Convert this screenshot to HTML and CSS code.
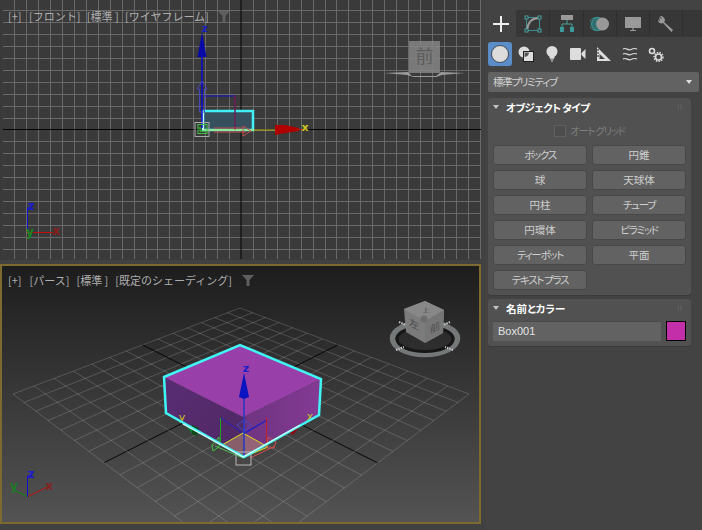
FILE: index.html
```html
<!DOCTYPE html>
<html lang="ja">
<head>
<meta charset="utf-8">
<title>3ds Max</title>
<link rel="stylesheet" href="styles.css">
</head>
<body>
<div class="app">
  <main class="views">
    <section class="viewport front">
      <svg class="scene" viewBox="0 0 481 260" width="481" height="260" aria-hidden="true">
        <g id="front-grid"></g>
        <!-- view cube -->
        <rect x="409" y="41" width="31" height="32" fill="#8a8a8a" fill-opacity=".8"/>
        <rect x="413" y="44" width="23" height="26" fill="#7c7c7c" fill-opacity=".6"/>
        <text x="424.500" y="63" class="cube-label big" text-anchor="middle">前</text>
        <path d="M384 73 L408 72 L412 76 L436 76 L441 72 L465 73 L442 75 L436 77 L414 77 L407 75Z" fill="#9a9a9a"/>
        <!-- box -->
        <rect x="203" y="111" width="50" height="19" fill="#37505e" stroke="#41f0f5" stroke-width="2.500"/>
        <path d="M203 111V130" stroke="#e8ffff" stroke-width="1.500"/>
        <path d="M204 96H235V130" fill="none" stroke="#1414c8"/>
        <path d="M235 96V130" stroke="#9a2020"/>
        <!-- gizmo -->
        <path d="M202 128V56" stroke="#0a0ad0" stroke-width="1.500"/>
        <path d="M202 32L197.500 57H206.500Z" fill="#0a0aa8"/>
        <path d="M197 89L202 81L207 89H204.500V112H199.500V89Z" fill="none" stroke="#4848b8"/>
        <path d="M203 130H275" stroke="#e0e040"/>
        <path d="M214 128H243M214 132H246" stroke="#c25050"/>
        <path d="M243 126V136L251 131Z" fill="none" stroke="#c25050"/>
        <path d="M275 125L285 125L299 128L299 131L285 133L275 135Z" fill="#b00000"/>
        <path d="M299 129.500H304" stroke="#c02020"/>
        <text x="305" y="131" class="axis yellow" text-anchor="middle">x</text>
        <text x="205" y="32" class="axis blue tiny" text-anchor="middle">z</text>
        <rect x="195" y="122.500" width="14" height="14" fill="none" stroke="#a8a8a8"/>
        <rect x="198" y="124.500" width="9" height="9" fill="none" stroke="#40c040"/>
        <path d="M200 127V131H205" fill="none" stroke="#40e040"/>
        <!-- tripod -->
        <path d="M27.500 233V208H33" fill="none" stroke="#1212c8"/>
        <path d="M27 232.500H53" stroke="#c01010"/>
        <text x="31" y="210" class="axis blue small" text-anchor="middle">z</text>
        <text x="56" y="235" class="axis red small" text-anchor="middle">x</text>
        <text x="30" y="236" class="axis green small" text-anchor="middle">y</text>
      </svg>
      <div class="labels">
        <span class="tag first">[+]</span><span class="tag">[フロント]</span><span class="tag">[標準 ]</span><span class="tag">[ワイヤフレーム]</span>
        <svg class="funnel" viewBox="0 0 12 11" width="12" height="11"><path d="M0 0H12L7.500 5V11H4.500V5Z"/></svg>
      </div>
    </section>

    <section class="viewport persp">
      <svg class="scene" viewBox="0 0 477 256" width="477" height="256" aria-hidden="true">
        <g transform="translate(-2 -266)">
          <g id="persp-grid"></g>
          <!-- box -->
          <path d="M164 377L243 417L244 457L166 413Z" fill="url(#leftFace)"/>
          <path d="M321 379L243 417L244 457L319 415Z" fill="url(#rightFace)"/>
          <path d="M240 345L321 379L243 417L164 377Z" fill="#993fa9"/>
          <!-- gizmo on box -->
          <path d="M221 418L244 434L267 420L244 433" fill="none" stroke="#2020c8"/>
          <path d="M244 434V420L237 425L244 431L251 425L244 420" fill="none" stroke="#4848c8"/>
          <path d="M220.500 418V442" stroke="#20a020"/>
          <path d="M266.500 418V444" stroke="#c02020"/>
          <path d="M222 445L243 433L268 447L244 457Z" fill="#b48a70" fill-opacity=".55" stroke="#e0e020"/>
          <path d="M212 445L219 437V447L213 451Z" fill="none" stroke="#40c040"/>
          <path d="M268 437L276 442L274 448L267 448Z" fill="none" stroke="#c85050"/>
          <path d="M215 446L243 458" fill="none" stroke="#50c050"/>
          <path d="M250 458L275 446" fill="none" stroke="#d05050"/>
          <path d="M184 423L198 428L193 435Z" fill="#0a7a30"/>
          <path d="M192 425L199 428L197 436L192 434Z" fill="#0a4a18"/>
          <path d="M288 432L300 424L298 429L293 435Z" fill="#8c0c14"/>
          <text x="182" y="421" class="axis yellow thin" text-anchor="middle">y</text>
          <text x="310" y="420" class="axis yellow thin" text-anchor="middle">x</text>
          <path d="M244 456V398" stroke="#2438c0" stroke-width="1.500"/>
          <path d="M244 373L239 397L244 399L249 397Z" fill="#0a14c0"/>
          <text x="246" y="372" class="axis blue" text-anchor="middle">z</text>
          <rect x="236" y="452" width="15" height="13" fill="none" stroke="#b8b8b8"/>
          <!-- outline -->
          <path d="M164 377L240 345L321 379L319 415L244 457L166 413Z" fill="none" stroke="#41f5f5" stroke-width="2.500"/>
          <path d="M183 424L243 457L300 425" fill="none" stroke="#d8ffff" stroke-width="1.200"/>
          <!-- view cube -->
          <ellipse cx="425" cy="338.500" rx="32.500" ry="16" fill="none" stroke="#747879" stroke-width="5.500"/>
          <ellipse cx="425" cy="339" rx="28" ry="12.500" fill="none" stroke="#161616" stroke-width="3"/>
          <path d="M425 301L444 310L443 333L425 343L406 332L404 309Z" fill="#7b7b7b"/>
          <path d="M425 301L444 310L425 321L404 309Z" fill="#888"/>
          <path d="M425 321L444 310L443 333L425 343Z" fill="#767676"/>
          <text class="cube-label" transform="translate(435 331) skewY(-28)" text-anchor="middle">前</text>
          <text class="cube-label" transform="translate(414 328) skewY(28)" text-anchor="middle">左</text>
          <text class="cube-label" transform="translate(426 312) scale(.8 .5)" text-anchor="middle">上</text>
          <circle cx="424" cy="319" r="3.500" fill="#6d6d6d"/>
          <g fill="none" stroke="#c4c4c4" stroke-width="2" stroke-dasharray="1.500 1">
            <path d="M399 322l7 3M450 322l-7 3M396 350l8-3M453 350l-8-3"/>
          </g>
          <!-- tripod -->
          <path d="M27.500 497V476H33" fill="none" stroke="#1212c8"/>
          <path d="M28 496.500L47 487" stroke="#c01010"/>
          <path d="M27 496.500L14 490" stroke="#108a10"/>
          <text x="31" y="478" class="axis blue small" text-anchor="middle">z</text>
          <text x="49" y="490" class="axis red dim small" text-anchor="middle">x</text>
          <text x="14" y="490" class="axis green dim small" text-anchor="middle">y</text>
        </g>
        <defs>
          <linearGradient id="leftFace" x1="0" y1="0" x2="1" y2="1"><stop offset="0" stop-color="#5a2d74"/><stop offset="1" stop-color="#4f2863"/></linearGradient>
          <linearGradient id="rightFace" x1="0" y1="0" x2="1" y2="0"><stop offset="0" stop-color="#6e3480"/><stop offset="1" stop-color="#843a94"/></linearGradient>
        </defs>
      </svg>
      <div class="labels">
        <span class="tag first">[+]</span><span class="tag">[パース]</span><span class="tag">[標準 ]</span><span class="tag">[既定のシェーディング]</span>
        <svg class="funnel" viewBox="0 0 12 11" width="12" height="11"><path d="M0 0H12L7.500 5V11H4.500V5Z"/></svg>
      </div>
    </section>
  </main>

  <aside class="panel">
    <div class="grip"></div>
    <nav class="tabs">
      <div class="tab active"><svg viewBox="0 0 20 20" width="20" height="20"><path d="M10 2V18M2 10H18" stroke="#eee" stroke-width="2"/></svg></div>
      <div class="tab wide"><svg viewBox="0 0 18 18" width="18" height="18"><rect x="2.500" y="2.500" width="13" height="13" fill="none" stroke="#3d8d8d"/><path d="M3 15C4 7 8 3 15 3" fill="none" stroke="#999" stroke-width="2"/><g fill="#333" stroke="#4aa0a0"><rect x="1" y="1" width="3" height="3"/><rect x="14" y="1" width="3" height="3"/><rect x="1" y="14" width="3" height="3"/><rect x="14" y="14" width="3" height="3"/></g></svg></div>
      <div class="tab wide"><svg viewBox="0 0 16 18" width="16" height="18"><rect x="2" y="0" width="12" height="5" fill="#999"/><path d="M8 5V9M3 13V9H13V13" fill="none" stroke="#4aa0a0"/><rect x="1" y="12" width="4" height="5" fill="#3d9a9a"/><rect x="11" y="12" width="4" height="5" fill="#3d9a9a"/></svg></div>
      <div class="tab"><svg viewBox="0 0 20 16" width="20" height="16"><circle cx="6" cy="8" r="6.500" fill="none" stroke="#3d8d8d"/><circle cx="8" cy="8" r="6.500" fill="#2f6f70" stroke="#3d9a9a"/><circle cx="12.500" cy="8" r="6.500" fill="#999"/></svg></div>
      <div class="tab"><svg viewBox="0 0 18 16" width="18" height="16"><rect x="1" y="1" width="16" height="11" fill="#999"/><path d="M6 15H12V14H6Z" fill="#999"/><rect x="8" y="12" width="2" height="2" fill="#777"/></svg></div>
      <div class="tab"><svg viewBox="0 0 18 18" width="18" height="18"><path d="M2 2L6 5L7 7L16 15L14.500 17L6 8L3 7Z" fill="#999"/><path d="M1 5C1 8 4 9 6 8L8 6C8 3 6 1 3 1L5 4L3 6Z" fill="#999"/></svg></div>
    </nav>
    <div class="categories">
      <div class="cat selected"><svg viewBox="0 0 20 20" width="20" height="20"><circle cx="10" cy="10" r="8.500" fill="#dcdcdc" stroke="#222" stroke-width=".7"/></svg></div>
      <div class="cat"><svg viewBox="0 0 16 16" width="16" height="16"><circle cx="6" cy="6" r="5.500" fill="#ddd"/><rect x="5.500" y="5.500" width="10" height="10" fill="#ddd" stroke="#222"/><path d="M6.500 6.500H11A5 5 0 0 1 6.500 11Z" fill="#555"/></svg></div>
      <div class="cat"><svg viewBox="0 0 14 16" width="14" height="16"><circle cx="7" cy="5.500" r="5.500" fill="#ddd"/><path d="M5 10H9V12H5ZM5 13H9M6 15H8" fill="#ddd" stroke="#ddd"/></svg></div>
      <div class="cat"><svg viewBox="0 0 16 12" width="16" height="12"><rect x="0" y="0" width="11" height="12" rx="1" fill="#ddd"/><path d="M11.500 5L15.500 1V11L11.500 7Z" fill="#ddd"/></svg></div>
      <div class="cat"><svg viewBox="0 0 16 16" width="16" height="16"><path d="M1 1V15H15ZM3.500 8V13H9Z" fill="#ddd" fill-rule="evenodd"/><path d="M1 4H3M1 7H3M1 10H3" stroke="#222"/></svg></div>
      <div class="cat"><svg viewBox="0 0 16 14" width="16" height="14"><path d="M1 2C4 0 6 4 9 2.500S13 1 15 2M1 7C4 5 6 9 9 7.500S13 6 15 7M1 12C4 10 6 14 9 12.500S13 11 15 12" fill="none" stroke="#ddd" stroke-width="1.200"/></svg></div>
      <div class="cat"><svg viewBox="0 0 16 15" width="16" height="15"><circle cx="4" cy="4" r="2.500" fill="none" stroke="#ddd" stroke-width="1.600"/><circle cx="10.500" cy="10" r="3" fill="none" stroke="#ddd" stroke-width="1.600"/><circle cx="10.500" cy="10" r="4.500" fill="none" stroke="#ddd" stroke-width="1.500" stroke-dasharray="1.500 1.200"/></svg></div>
    </div>
    <div class="dropdown"><span class="kana">標準プリミティブ</span><i class="caret"></i></div>

    <section class="rollout">
      <header class="roll-head"><i class="tri"></i><h2 class="kana-bold">オブジェクト タイプ</h2><b class="dots"></b></header>
      <label class="check"><i class="box"></i><span class="kana">オート グリッド</span></label>
      <div class="btn-grid">
        <button class="kana">ボックス</button><button>円錐</button>
        <button>球</button><button>天球体</button>
        <button>円柱</button><button class="kana">チューブ</button>
        <button>円環体</button><button class="kana">ピラミッド</button>
        <button class="kana">ティーポット</button><button>平面</button>
        <button class="kana">テキスト プラス</button>
      </div>
    </section>

    <section class="rollout second">
      <header class="roll-head"><i class="tri"></i><h2>名前とカラー</h2><b class="dots"></b></header>
      <div class="name-row"><div class="name">Box001</div><div class="swatch"></div></div>
    </section>
  </aside>
</div>
<script src="grid.js"></script>
</body>
</html>
```
FILE: styles.css
```css
* { box-sizing: border-box; }
html, body { margin: 0; height: 100%; overflow: hidden; background: #444; }
body { font-family: "Noto Sans CJK JP", "Noto Sans", sans-serif; }

.app { display: flex; width: 702px; height: 530px; }

.views { width: 485px; flex: none; display: flex; flex-direction: column; background: #414141; }

.viewport { position: relative; width: 481px; overflow: hidden; }
.scene { display: block; }
.front { height: 260px; background: #3a3a3a; }
.persp {
  margin-top: 4px; height: 260px;
  border: 2px solid #7c6a2f;
  background: linear-gradient(#1d1d1d 0%, #535353 100%);
}

.labels {
  position: absolute; left: 8px; top: 10px;
  display: flex; align-items: center; gap: 7px;
  height: 13px; font-size: 11px; line-height: 13px; color: #aeaeae; white-space: nowrap;
}
.front .labels { gap: 6.400px; }
.persp .labels { left: 6px; top: 8px; }
.funnel { margin-left: 3px; fill: #5f5f5f; }
.tag.first { margin-right: 1px; }

.axis { font: 700 11px "DejaVu Sans", sans-serif; }
.axis.tiny { font-size: 10px; }
.axis.small { font-size: 12px; }
.axis.thin { font-weight: 400; }
.axis.blue { fill: #1c1cc8; }
.axis.yellow { fill: #c8c820; }
.axis.red { fill: #8c1a1a; }
.axis.green { fill: #12881e; }
.axis.dim { opacity: .8; }
.cube-label { font: 10px "Noto Sans CJK JP", sans-serif; fill: #4c4c4c; }
.cube-label.big { font-size: 18px; fill: #5c5c5c; }

.panel { flex: 1; min-width: 0; background: #434343; font-size: 10.500px; color: #c8c8c8; font-feature-settings: "palt"; }
.grip {
  height: 10px; padding-top: 2px; background-clip: content-box;
  background-image: repeating-linear-gradient(90deg, #8a8a8a 0 1px, #444 1px 2px);
  background-size: auto 2px; background-repeat: no-repeat;
}
.tabs { display: flex; height: 27px; background: #373737; }
.tab {
  width: 33px; display: flex; align-items: center; justify-content: center;
  border-right: 1px solid #2e2e2e;
}
.tab.active { width: 31px; background: #434343; border-right: none; }
.tab.wide { width: 34px; }

.categories { display: flex; align-items: flex-start; gap: 2px; padding: 5px 3px 0; height: 35px; }
.cat { width: 24px; height: 24px; flex: none; display: flex; align-items: center; justify-content: center; border-radius: 3px; }
.cat.selected { background: #5b8dc9; }

.dropdown {
  margin: 0 3px; height: 20px; padding: 0 7px 0 5px;
  display: flex; align-items: center; justify-content: space-between;
  background: #626262; border-radius: 2px; color: #d2d2d2; line-height: 20px;
}
.caret { width: 0; height: 0; border: 3px solid transparent; border-top: 4px solid #ddd; border-bottom: 0; }

.rollout { margin: 6px 11px 0 3px; background: #515151; border-radius: 3px; padding: 0 5px 5px; box-shadow: 0 1px 0 #3a3a3a; }
.rollout.second { margin-top: 4px; }
.roll-head { display: flex; align-items: center; height: 18px; }
.tri { width: 0; height: 0; border: 3px solid transparent; border-top: 4px solid #c4c4c4; border-bottom: 0; margin-right: 7px; }
.roll-head h2 { margin: 0; flex: 1; font-size: 10.500px; font-weight: 700; color: #fff; }
.roll-head h2.kana-bold { letter-spacing: -.5px; }
.dots {
  width: 6px; height: 6px; margin-right: 3px;
  background-image: radial-gradient(#848484 .7px, transparent .8px); background-size: 2.500px 2.500px;
}

.check { display: flex; align-items: center; justify-content: center; gap: 4px; height: 29px; color: #7d7d7d; }
.box { width: 12px; height: 12px; border: 1px solid #606060; background: #4c4c4c; }

.btn-grid { display: grid; grid-template-columns: 94px 94px; column-gap: 5px; row-gap: 5px; }
.btn-grid button {
  height: 20px; padding: 0; border: 1px solid #484848; border-radius: 3px;
  background: #626262; color: #cfcfcf; font: 10.500px/18px "Noto Sans CJK JP", sans-serif; font-feature-settings: "palt";
}
.panel .kana { letter-spacing: -1.300px; }

.second .roll-head { height: 22px; padding-bottom: 4px; }
.name-row { display: flex; gap: 5px; }
.name { width: 168px; height: 20px; padding-left: 5px; background: #626262; border-top: 1px solid #4a4a4a; font: 11px/18px "Liberation Sans", sans-serif; color: #e2e2e2; }
.swatch { width: 20px; height: 20px; background: #c22fa9; border: 1px solid #000; }
```
FILE: grid.js
```js
// Draws the construction grids of the two viewports from their geometry.
const NS = "http://www.w3.org/2000/svg";

function line(parent, x1, y1, x2, y2, stroke, width) {
  const el = document.createElementNS(NS, "line");
  el.setAttribute("x1", x1);
  el.setAttribute("y1", y1);
  el.setAttribute("x2", x2);
  el.setAttribute("y2", y2);
  el.setAttribute("stroke", stroke);
  el.setAttribute("stroke-width", width);
  parent.appendChild(el);
}

// Orthographic front view
(function () {
  const g = document.getElementById("front-grid");
  const cx = 241, cy = 129.5, step = 11.93;
  for (let i = -19; i <= 20; i++) {
    const x = Math.round(cx + i * step) + 0.5;
    if (i !== 0 && x > 3) line(g, x, 0, x, 259, "#696969", 1);
  }
  for (let j = -10; j <= 11; j++) {
    const y = Math.round(cy + j * step) + 0.5;
    if (j !== 0 && y < 259) line(g, 3, y, 481, y, "#696969", 1);
  }
  line(g, 3, 129.5, 481, 129.5, "#050505", 1);
  line(g, 241, 0, 241, 259, "#050505", 1);
})();

// Perspective view: homography of the unit square onto four screen corners
(function () {
  const g = document.getElementById("persp-grid");
  const P = [[240, 308], [469, 394], [241, 566], [13, 394]];
  const [a, b, c, d] = P;
  const dx1 = b[0] - c[0], dy1 = b[1] - c[1];
  const dx2 = d[0] - c[0], dy2 = d[1] - c[1];
  const sx = a[0] - b[0] + c[0] - d[0], sy = a[1] - b[1] + c[1] - d[1];
  const den = dx1 * dy2 - dx2 * dy1;
  const g7 = (sx * dy2 - dx2 * sy) / den, h7 = (dx1 * sy - sx * dy1) / den;
  const A = b[0] - a[0] + g7 * b[0], B = d[0] - a[0] + h7 * d[0];
  const D = b[1] - a[1] + g7 * b[1], E = d[1] - a[1] + h7 * d[1];
  const map = (u, v) => {
    const w = g7 * u + h7 * v + 1;
    return [(A * u + B * v + a[0]) / w, (D * u + E * v + a[1]) / w];
  };
  const N = 14;
  for (let i = 0; i <= N; i++) {
    const t = i / N;
    const mid = i === N / 2;
    const color = mid ? "#060606" : "rgba(255,255,255,.17)";
    const p1 = map(t, 0), p2 = map(t, 1), q1 = map(0, t), q2 = map(1, t);
    line(g, p1[0], p1[1], p2[0], p2[1], color, 1);
    line(g, q1[0], q1[1], q2[0], q2[1], color, 1);
  }
})();
```
